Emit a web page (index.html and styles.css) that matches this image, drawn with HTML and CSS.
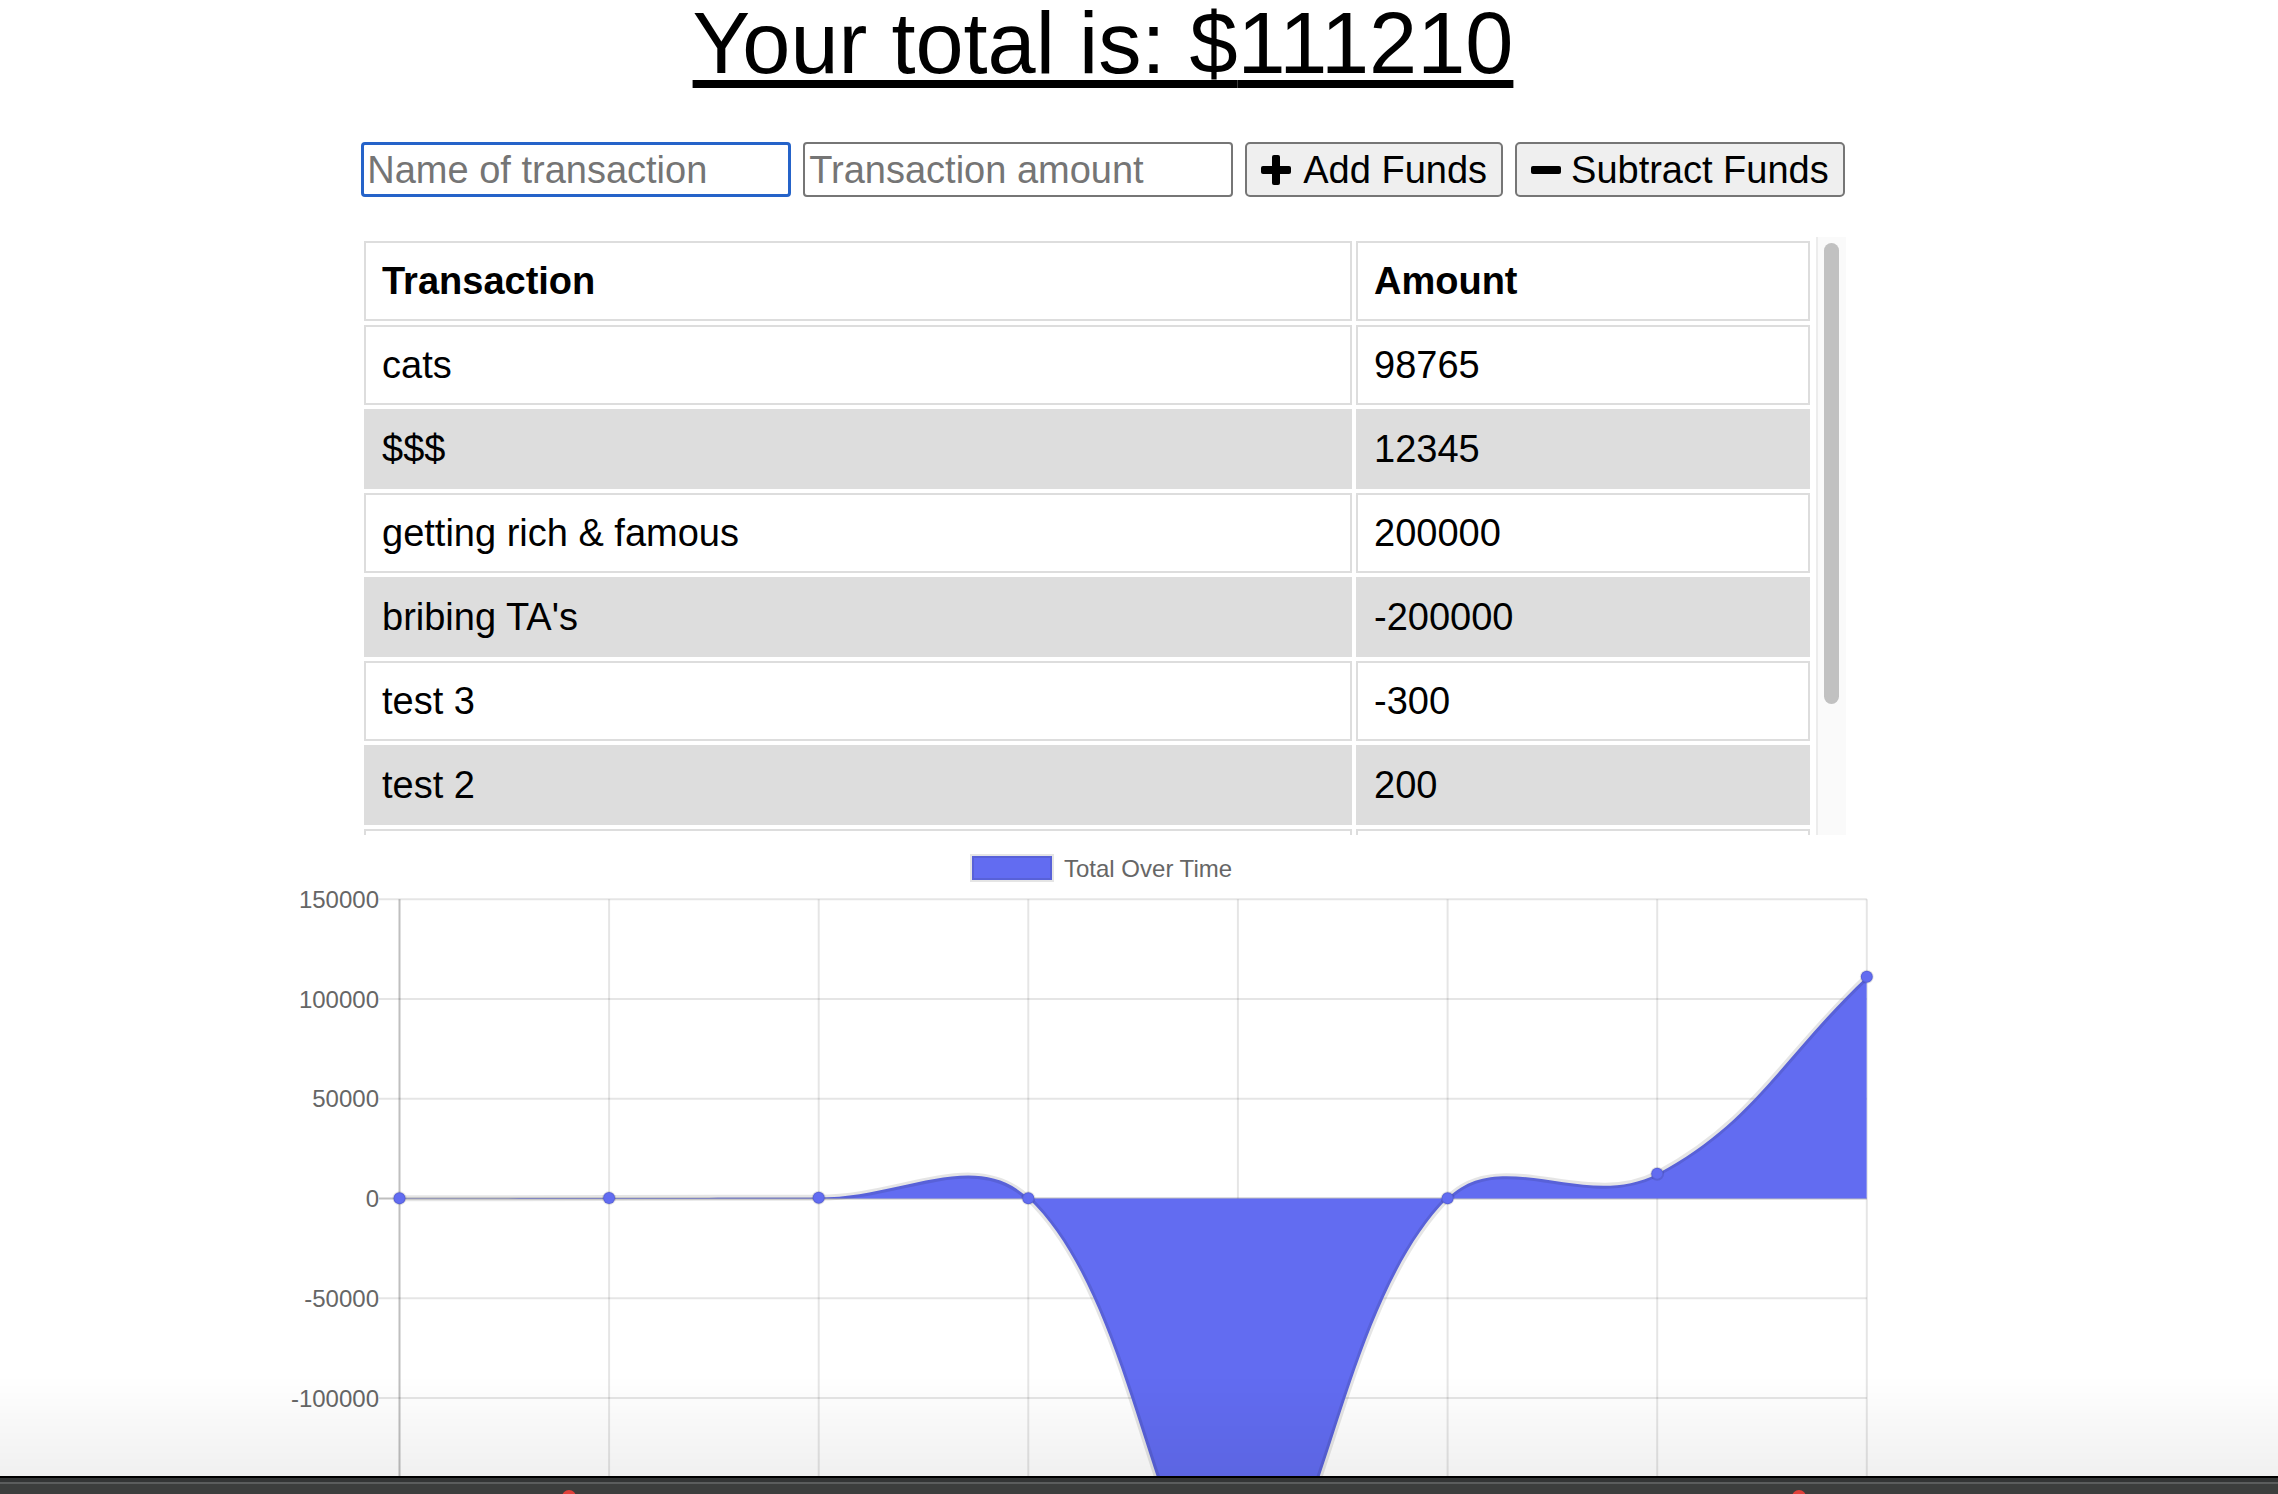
FILE: index.html
```html
<!DOCTYPE html>
<html lang="en">
<head>
<meta charset="utf-8">
<title>Budget Tracker</title>
<link rel="stylesheet" href="styles.css">
</head>
<body>
<div class="page">
  <h1 class="total">Your total is: $<span>111210</span></h1>

  <div class="entry">
    <input class="field field-active" type="text" placeholder="Name of transaction">
    <input class="field" type="number" placeholder="Transaction amount">
    <button class="btn"><svg class="ico" viewBox="0 0 30 30"><rect x="11" y="0" width="8" height="30" rx="2"/><rect x="0" y="11" width="30" height="8" rx="2"/></svg><span class="btn-label">Add Funds</span></button>
    <button class="btn btn-sub"><svg class="ico" viewBox="0 0 30 30"><rect x="0" y="11" width="30" height="8" rx="2"/></svg><span class="btn-label">Subtract Funds</span></button>
  </div>

  <div class="ledger">
    <div class="ledger-view">
      <table>
        <colgroup><col class="c1"><col class="c2"></colgroup>
        <thead>
          <tr><th>Transaction</th><th>Amount</th></tr>
        </thead>
        <tbody>
          <tr><td>cats</td><td>98765</td></tr>
          <tr class="alt"><td>$$$</td><td>12345</td></tr>
          <tr><td>getting rich &amp; famous</td><td>200000</td></tr>
          <tr class="alt"><td>bribing TA's</td><td>-200000</td></tr>
          <tr><td>test 3</td><td>-300</td></tr>
          <tr class="alt"><td>test 2</td><td>200</td></tr>
          <tr><td>test 1</td><td>100</td></tr>
          <tr class="alt"><td>test</td><td>100</td></tr>
        </tbody>
      </table>
    </div>
    <div class="rail"><div class="thumb"></div></div>
  </div>

  <svg class="chart" viewBox="280 835 1646 659" width="1646" height="659">
    <defs>
      <clipPath id="area"><rect x="399.5" y="899.3" width="1467.3" height="698.1"/></clipPath>
    </defs>
    <rect class="legend-box" x="972" y="856" width="80" height="24"/>
    <text class="legend-text" x="1064" y="876.5">Total Over Time</text>

    <g class="grid">
      <line x1="379" y1="899.3" x2="1866.8" y2="899.3"/>
      <line x1="379" y1="999.1" x2="1866.8" y2="999.1"/>
      <line x1="379" y1="1098.8" x2="1866.8" y2="1098.8"/>
      <line x1="379" y1="1298.2" x2="1866.8" y2="1298.2"/>
      <line x1="379" y1="1398" x2="1866.8" y2="1398"/>
      <line x1="379" y1="1497.7" x2="1866.8" y2="1497.7"/>
      <line x1="609.1" y1="899.3" x2="609.1" y2="1620"/>
      <line x1="818.7" y1="899.3" x2="818.7" y2="1620"/>
      <line x1="1028.3" y1="899.3" x2="1028.3" y2="1620"/>
      <line x1="1237.9" y1="899.3" x2="1237.9" y2="1620"/>
      <line x1="1447.6" y1="899.3" x2="1447.6" y2="1620"/>
      <line x1="1657.2" y1="899.3" x2="1657.2" y2="1620"/>
      <line x1="1866.8" y1="899.3" x2="1866.8" y2="1620"/>
    </g>
    <g class="grid-zero">
      <line x1="379" y1="1198.5" x2="1866.8" y2="1198.5"/>
      <line x1="399.5" y1="899.3" x2="399.5" y2="1620"/>
    </g>

    <g class="ylabels">
      <text x="379" y="907.9">150000</text>
      <text x="379" y="1007.7">100000</text>
      <text x="379" y="1107.4">50000</text>
      <text x="379" y="1207.1">0</text>
      <text x="379" y="1306.8">-50000</text>
      <text x="379" y="1406.6">-100000</text>
    </g>

    <g clip-path="url(#area)">
      <path class="fill" d="M399.5,1198.3 C483.3,1198.2 525.3,1198.2 609.1,1198.1 C692.9,1198 734.9,1197.7 818.7,1197.7 C902.5,1197.7 975.1,1147.6 1028.3,1198.3 C1142.7,1307.4 1154,1597.2 1237.9,1597.2 C1321.8,1597.2 1333.3,1313.7 1447.6,1198.3 C1501.1,1144.3 1586.2,1211.2 1657.2,1173.7 C1753.9,1122.6 1783,1055.5 1866.8,976.7 L1866.8,1198.5 L399.5,1198.5 Z"/>
      <path class="line" d="M399.5,1198.3 C483.3,1198.2 525.3,1198.2 609.1,1198.1 C692.9,1198 734.9,1197.7 818.7,1197.7 C902.5,1197.7 975.1,1147.6 1028.3,1198.3 C1142.7,1307.4 1154,1597.2 1237.9,1597.2 C1321.8,1597.2 1333.3,1313.7 1447.6,1198.3 C1501.1,1144.3 1586.2,1211.2 1657.2,1173.7 C1753.9,1122.6 1783,1055.5 1866.8,976.7"/>
    </g>
    <g class="points">
      <circle cx="399.5" cy="1198.3" r="6"/>
      <circle cx="609.1" cy="1198.1" r="6"/>
      <circle cx="818.7" cy="1197.7" r="6"/>
      <circle cx="1028.3" cy="1198.3" r="6"/>
      <circle cx="1237.9" cy="1597.2" r="6"/>
      <circle cx="1447.6" cy="1198.3" r="6"/>
      <circle cx="1657.2" cy="1173.7" r="6"/>
      <circle cx="1866.8" cy="976.7" r="6"/>
    </g>
  </svg>
</div>

<div class="shade"></div>
<div class="dock">
  <span class="dock-icon dock-icon-a"></span>
  <span class="dock-icon dock-icon-b"></span>
</div>
</body>
</html>
```

FILE: styles.css
```css
* {
  box-sizing: border-box;
}

html,
body {
  margin: 0;
  background: #fff;
}

body {
  font-family: "Liberation Sans", Arial, Helvetica, sans-serif;
  color: #000;
  overflow: hidden;
  height: 1494px;
}

.page {
  width: 2206px;
}

.total {
  margin: 0;
  padding-top: 1px;
  font-size: 86.5px;
  font-weight: normal;
  line-height: 85px;
  text-align: center;
  text-decoration: underline;
  text-decoration-thickness: 8px;
  text-underline-offset: 7px;
}

.entry {
  display: flex;
  justify-content: center;
  gap: 12px;
  margin-top: 56px;
}

.field {
  width: 430px;
  height: 55px;
  padding: 1px 4px 0;
  border: 2px solid #767676;
  border-radius: 4px;
  font-family: inherit;
  font-size: 38px;
  color: #000;
  background: #fff;
  outline: none;
}

.field::placeholder {
  color: #757575;
}

.field-active {
  border: 3px solid #2563c9;
  padding: 1px 3px 0;
}

.btn {
  display: inline-flex;
  align-items: center;
  height: 55px;
  padding: 1px 14px 0;
  border: 2px solid #767676;
  border-radius: 5px;
  background: #efefef;
  font-family: inherit;
  font-size: 38px;
  color: #000;
}

.ico {
  width: 30px;
  height: 30px;
  margin-right: 12px;
  fill: #000;
  flex: none;
}

.btn-sub .ico {
  margin-right: 10px;
}

.ledger {
  display: flex;
  width: 1486px;
  height: 598px;
  margin: 40px auto 0;
}

.ledger-view {
  flex: 1;
  overflow: hidden;
}

.rail {
  width: 30px;
  flex: none;
  padding: 6px 7px 0 6px;
  background: #fafafa;
  border-left: 2px solid #ececec;
}

.thumb {
  height: 461px;
  background: #c1c1c1;
  border-radius: 8px;
}

.ledger table {
  width: 1454px;
  border-spacing: 4px;
  table-layout: fixed;
  font-size: 38px;
}

.c1 {
  width: 988px;
}

.c2 {
  width: 454px;
}

.ledger th,
.ledger td {
  border: 2px solid #ddd;
  padding: 16px;
  text-align: left;
  line-height: 44px;
}

.ledger th {
  font-weight: bold;
}

.ledger .alt td {
  background: #ddd;
}

.chart {
  display: block;
  margin-left: 280px;
  font-family: "Liberation Sans", Arial, Helvetica, sans-serif;
}

.legend-box {
  fill: #626cf1;
  stroke: rgba(0, 0, 0, 0.1);
  stroke-width: 4;
}

.legend-text {
  font-size: 24px;
  fill: #666;
}

.grid line {
  stroke: rgba(0, 0, 0, 0.1);
  stroke-width: 2;
}

.grid-zero line {
  stroke: rgba(0, 0, 0, 0.25);
  stroke-width: 2;
}

.ylabels text {
  font-size: 24px;
  fill: #666;
  text-anchor: end;
}

.fill {
  fill: #626cf1;
}

.line {
  fill: none;
  stroke: rgba(0, 0, 0, 0.1);
  stroke-width: 6;
}

.points circle {
  fill: #626cf1;
  stroke: rgba(0, 0, 0, 0.1);
  stroke-width: 2;
}

.shade {
  position: fixed;
  left: 0;
  right: 0;
  bottom: 18px;
  height: 100px;
  background: linear-gradient(rgba(0, 0, 0, 0), rgba(0, 0, 0, 0.06));
  pointer-events: none;
}

.dock {
  position: fixed;
  left: 0;
  right: 0;
  bottom: 0;
  height: 18px;
  overflow: hidden;
  background: linear-gradient(#000 0, #000 2px, #333535 2px, #333535 6px, #5b5d5d 6px, #5b5d5d 8px, #3c3e3d 8px);
}

.dock-icon {
  position: absolute;
  top: 14px;
  width: 14px;
  height: 14px;
  border-radius: 50%;
  background: #e0413a;
}

.dock-icon-a {
  left: 562px;
}

.dock-icon-b {
  left: 1792px;
}
```
